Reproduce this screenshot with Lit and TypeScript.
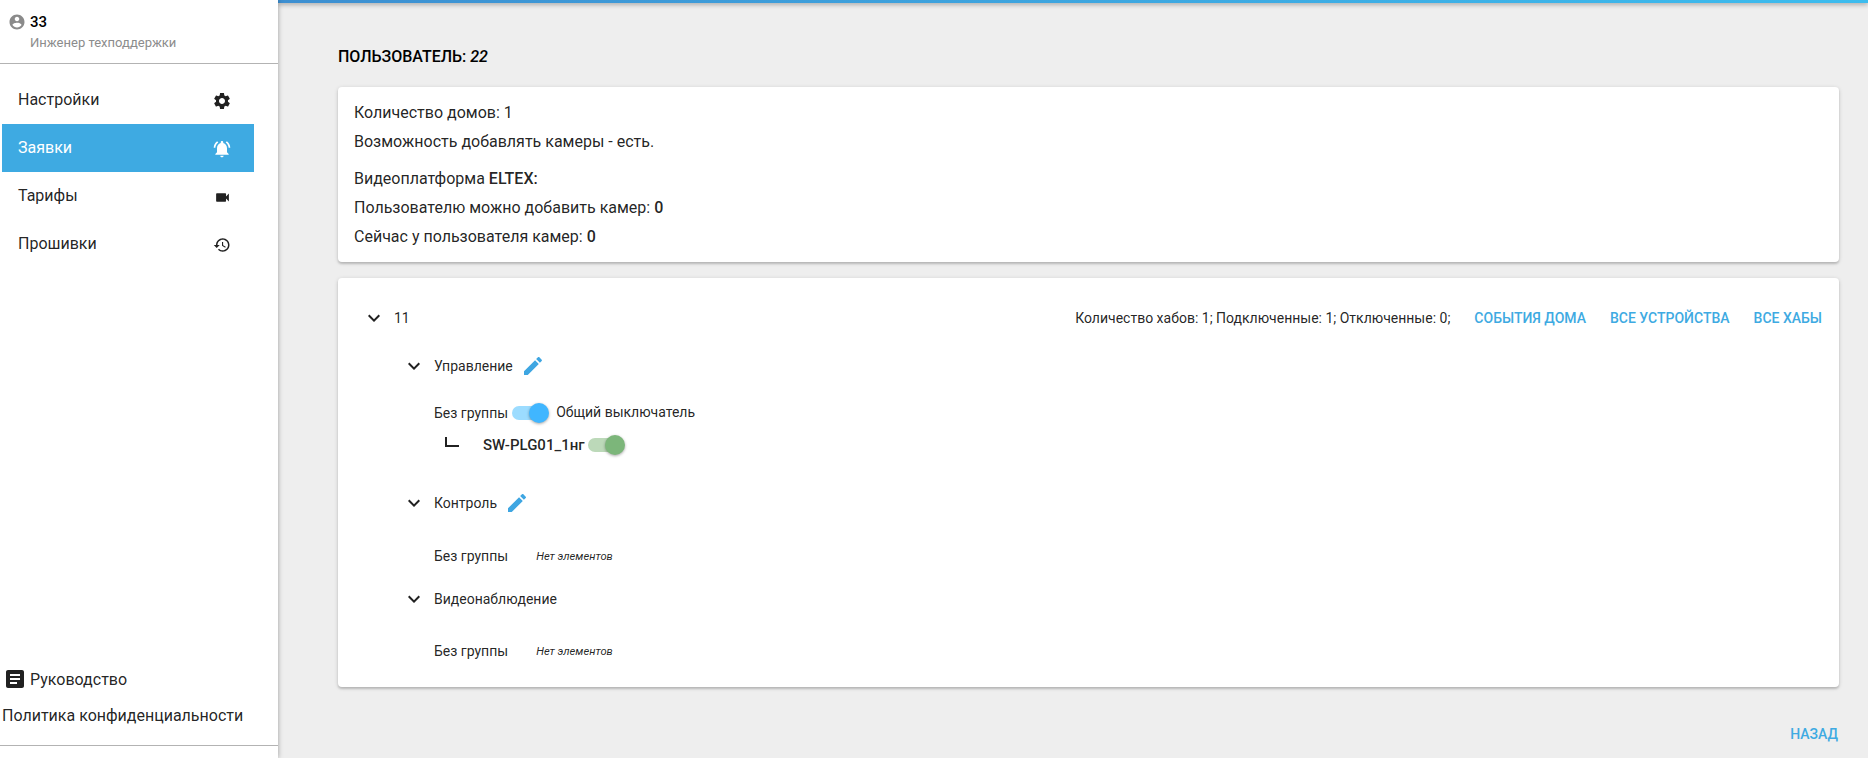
import { LitElement, html, css, svg } from "lit";
import { customElement } from "lit/decorators.js";

const icon = (d: string, size = 24, cls = "") =>
  html`<svg class=${cls} width=${size} height=${size} viewBox="0 0 24 24" fill="currentColor">${svg`<path d=${d}></path>`}</svg>`;

const P = {
  account: "M12 2C6.48 2 2 6.48 2 12s4.48 10 10 10 10-4.48 10-10S17.52 2 12 2zm0 3c1.66 0 3 1.34 3 3s-1.34 3-3 3-3-1.34-3-3 1.34-3 3-3zm0 14.2c-2.5 0-4.71-1.28-6-3.22.03-1.99 4-3.08 6-3.08 1.99 0 5.97 1.09 6 3.08-1.29 1.94-3.5 3.22-6 3.22z",
  gear: "M19.14 12.94c.04-.3.06-.61.06-.94 0-.32-.02-.64-.07-.94l2.03-1.58c.18-.14.23-.41.12-.61l-1.92-3.32c-.12-.22-.37-.29-.59-.22l-2.39.96c-.5-.38-1.03-.7-1.62-.94l-.36-2.54c-.04-.24-.24-.41-.48-.41h-3.84c-.24 0-.43.17-.47.41l-.36 2.54c-.59.24-1.13.57-1.62.94l-2.39-.96c-.22-.08-.47 0-.59.22L2.74 8.87c-.12.21-.08.47.12.61l2.03 1.58c-.05.3-.09.63-.09.94s.02.64.07.94l-2.03 1.58c-.18.14-.23.41-.12.61l1.92 3.32c.12.22.37.29.59.22l2.39-.96c.5.38 1.03.7 1.62.94l.36 2.54c.05.24.24.41.48.41h3.84c.24 0 .44-.17.47-.41l.36-2.54c.59-.24 1.13-.56 1.62-.94l2.39.96c.22.08.47 0 .59-.22l1.92-3.32c.12-.22.07-.47-.12-.61l-2.01-1.58zM12 15.6c-1.98 0-3.6-1.62-3.6-3.6s1.62-3.6 3.6-3.6 3.6 1.62 3.6 3.6-1.62 3.6-3.6 3.6z",
  alarm: "M7.58 4.08 6.15 2.65C3.75 4.48 2.17 7.3 2.03 10.5h2c.15-2.65 1.51-4.97 3.55-6.42zm12.39 6.42h2c-.15-3.2-1.73-6.02-4.12-7.85l-1.42 1.43c2.02 1.45 3.39 3.77 3.54 6.42zM18 11c0-3.07-1.64-5.64-4.5-6.32V4c0-.83-.67-1.5-1.5-1.5s-1.5.67-1.5 1.5v.68C7.63 5.36 6 7.92 6 11v5l-2 2v1h16v-1l-2-2v-5zm-6 11c.14 0 .27-.01.4-.04.65-.14 1.18-.58 1.44-1.18.1-.24.15-.5.15-.78h-4c.01 1.1.9 2 2.01 2z",
  video: "M17 10.5V7c0-.55-.45-1-1-1H4c-.55 0-1 .45-1 1v10c0 .55.45 1 1 1h12c.55 0 1-.45 1-1v-3.5l4 4v-11l-4 4z",
  history: "M13 3c-4.97 0-9 4.03-9 9H1l3.89 3.89.07.14L9 12H6c0-3.87 3.13-7 7-7s7 3.13 7 7-3.13 7-7 7c-1.93 0-3.68-.79-4.94-2.06l-1.42 1.42C8.27 19.99 10.51 21 13 21c4.97 0 9-4.03 9-9s-4.03-9-9-9zm-1 5v5l4.28 2.54.72-1.21-3.5-2.08V8H12z",
  article: "M19 3H5c-1.1 0-2 .9-2 2v14c0 1.1.9 2 2 2h14c1.1 0 2-.9 2-2V5c0-1.1-.9-2-2-2zm-5 14H7v-2h7v2zm3-4H7v-2h10v2zm0-4H7V7h10v2z",
  chevron: "M7.41 8.59 12 13.17l4.59-4.58L18 10l-6 6-6-6 1.41-1.41z",
  pencil: "M3 17.25V21h3.75L17.81 9.94l-3.75-3.75L3 17.25zM20.71 7.04c.39-.39.39-1.02 0-1.41l-2.34-2.34c-.39-.39-1.02-.39-1.41 0l-1.83 1.83 3.75 3.75 1.83-1.83z",
};

@customElement("app-root")
export class AppRoot extends LitElement {
  static styles = css`
    :host { display: block; height: 758px; overflow: hidden; font-family: Roboto, "Liberation Sans", sans-serif; color: rgba(0,0,0,.87); background: #eee; }
    .page { display: flex; height: 758px; }
    .side { width: 278px; flex: none; background: #fff; box-shadow: 0 0 5px rgba(0,0,0,.35); display: flex; flex-direction: column; z-index: 2; }
    .user { box-sizing: border-box; padding: 13px 0 0 8px; border-bottom: 1px solid #b3b3b3; height: 64px; }
    .uname { display: flex; align-items: center; gap: 4px; font-size: 15px; font-weight: 500; color: #000; height: 18px; }
    .uname svg { color: #8a8a8a; }
    .urole { font-size: 13px; color: #8c8c8c; padding: 4px 0 0 22px; line-height: 15px; }
    .menu { padding: 12px 24px 0 2px; display: flex; flex-direction: column; }
    .item { height: 48px; display: flex; align-items: center; padding: 0 0 0 16px; font-size: 16px; color: rgba(0,0,0,.87); }
    .item span { flex: 1; padding-bottom: 2px; }
    .item.on { background: #3eaae2; color: #fff; }
    .ico { width: 20px; height: 20px; display: flex; align-items: center; justify-content: center; color: #212121; margin: 2px 22px 0 0; }
    .item.on .ico { color: #fff; }
    .foot { margin-top: auto; padding-bottom: 12px; }
    .guide { display: flex; align-items: center; gap: 3px; padding-left: 3px; font-size: 16px; height: 24px; }
    .guide svg { color: #212121; }
    .policy { font-size: 16px; padding: 15px 0 20px 2px; line-height: 19px; }
    .foot-line { border-top: 1px solid #b3b3b3; }
    .main { flex: 1; min-width: 0; position: relative; padding: 47px 29px 0 60px; }
    .bar { position: absolute; left: 0; right: 0; top: 0; height: 3px; background: linear-gradient(90deg, #3d8fd1, #3cbcee); box-shadow: 0 1px 5px rgba(0,0,0,.45); }
    h1 { margin: 0 0 20px; font-size: 16px; line-height: 20px; font-weight: 500; color: #000; text-transform: uppercase; }
    h1 i { font-weight: 500; }
    .card { background: #fff; border-radius: 4px; box-shadow: 0 2px 2px rgba(0,0,0,.14), 0 1px 4px rgba(0,0,0,.16); }
    .info { height: 175px; box-sizing: border-box; padding: 11px 16px; font-size: 16px; line-height: 29px; margin-bottom: 16px; }
    .info b { font-weight: 500; }
    .gap { height: 8px; }
    .home { height: 409px; box-sizing: border-box; padding: 24px 17px 0 24px; }
    .row { display: flex; align-items: center; }
    .head { height: 32px; font-size: 14px; }
    .head .num { margin-left: 8px; }
    .stats { margin-left: auto; font-size: 14px; }
    .link { color: #3eaae2; font-weight: 500; font-size: 14px; margin-left: 24px; text-transform: uppercase; }
    .chev { color: #212121; flex: none; }
    .sec { margin-left: 40px; }
    .sec-h { font-size: 14px; height: 32px; gap: 8px; }
    .pen { color: #3ea6e2; }
    .grp { margin-left: 32px; font-size: 14px; }
    .sub { height: 20px; }
    .none { font-size: 11.2px; font-style: italic; margin-left: 28px; }
    .sw { position: relative; width: 34px; height: 14px; border-radius: 7px; flex: none; margin: 0 10px 0 4px; }
    .sw::after { content: ""; position: absolute; right: -3px; top: -3px; width: 20px; height: 20px; border-radius: 50%; background: currentColor; box-shadow: 0 1px 3px rgba(0,0,0,.35); }
    .sw.blue { color: #40b6ff; background: #9cdcff; }
    .sw.green { color: #7cb67a; background: #bcd9b9; margin-left: 3px; }
    .lbl { padding-bottom: 2px; }
    .dev { font-weight: 500; font-size: 15px; }
    .corner { box-sizing: border-box; width: 14px; height: 10px; border-left: 2px solid #212121; border-bottom: 2px solid #212121; margin: 0 24px 0 11px; position: relative; top: -3px; }
    .back { display: flex; justify-content: flex-end; margin: 39px 1px 0 0; }
    .back .link { margin: 0; }
    .m-home { margin-top: 16px; }
    .m-a { margin-top: 21px; }
    .m-b { margin-top: 12px; }
    .m-c { margin-top: 32px; }
    .m-d { margin-top: 27px; }
    .m-e { margin-top: 17px; }
    .m-f { margin-top: 26px; }
  `;

  render() {
    return html`<div class="page">
      <aside class="side">
        <div class="user">
          <div class="uname">${icon(P.account, 18)}<span>33</span></div>
          <div class="urole">Инженер техподдержки</div>
        </div>
        <nav class="menu">
          <div class="item"><span>Настройки</span><div class="ico">${icon(P.gear, 20)}</div></div>
          <div class="item on"><span>Заявки</span><div class="ico">${icon(P.alarm, 20)}</div></div>
          <div class="item"><span>Тарифы</span><div class="ico">${icon(P.video, 17)}</div></div>
          <div class="item"><span>Прошивки</span><div class="ico">${icon(P.history, 18)}</div></div>
        </nav>
        <div class="foot">
          <div class="guide">${icon(P.article, 24)}<span>Руководство</span></div>
          <div class="policy">Политика конфиденциальности</div>
          <div class="foot-line"></div>
        </div>
      </aside>
      <main class="main">
        <div class="bar"></div>
        <h1>Пользователь: <i>22</i></h1>
        <section class="card info">
          <div>Количество домов: 1</div>
          <div>Возможность добавлять камеры - есть.</div>
          <div class="gap"></div>
          <div>Видеоплатформа <b>ELTEX:</b></div>
          <div>Пользователю можно добавить камер: <b>0</b></div>
          <div>Сейчас у пользователя камер: <b>0</b></div>
        </section>
        <section class="card home">
          <div class="row head">
            ${icon(P.chevron, 24, "chev")}<span class="num">11</span>
            <span class="stats">Количество хабов: 1; Подключенные: 1; Отключенные: 0;</span>
            <span class="link">События дома</span><span class="link">Все устройства</span><span class="link">Все хабы</span>
          </div>
          <div class="sec m-home">
            <div class="row sec-h">${icon(P.chevron, 24, "chev")}<span>Управление</span>${icon(P.pencil, 24, "pen")}</div>
            <div class="grp m-a">
              <div class="row sub"><span>Без группы</span><span class="sw blue"></span><span class="lbl">Общий выключатель</span></div>
              <div class="row sub m-b"><span class="corner"></span><span class="dev">SW-PLG01_1нг</span><span class="sw green"></span></div>
            </div>
          </div>
          <div class="sec m-c">
            <div class="row sec-h">${icon(P.chevron, 24, "chev")}<span>Контроль</span>${icon(P.pencil, 24, "pen")}</div>
            <div class="grp row sub m-d"><span>Без группы</span><span class="none">Нет элементов</span></div>
          </div>
          <div class="sec m-e">
            <div class="row sec-h">${icon(P.chevron, 24, "chev")}<span>Видеонаблюдение</span></div>
            <div class="grp row sub m-f"><span>Без группы</span><span class="none">Нет элементов</span></div>
          </div>
        </section>
        <div class="back"><span class="link">Назад</span></div>
      </main>
    </div>`;
  }
}
